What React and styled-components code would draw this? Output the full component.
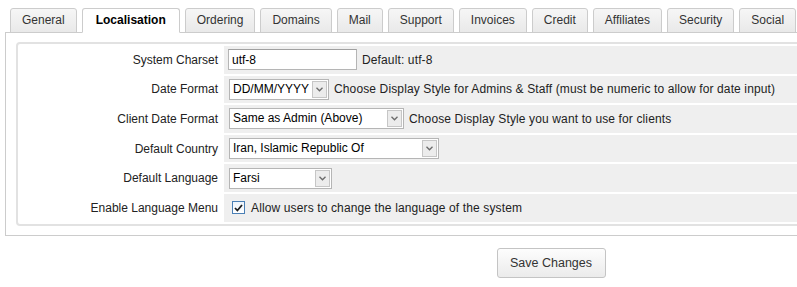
import React from 'react'
import styled, { createGlobalStyle } from 'styled-components'

const GlobalStyle = createGlobalStyle`
  body {
    margin: 0;
    background: #fff;
    overflow: hidden;
    font-family: 'Liberation Sans', Arial, sans-serif;
    font-size: 12px;
    color: #222;
  }
`

const Page = styled.div`
  width: 1092px;
  padding: 8px 0 0 5px;
`

const TabBar = styled.ul`
  display: flex;
  gap: 5px;
  margin: 0;
  padding: 0 0 0 5px;
  list-style: none;
  position: relative;
  z-index: 1;
`

const Tab = styled.li`
  height: 23px;
  line-height: 23px;
  padding: 0 ${(p) => (p.$active ? 13 : 11)}px;
  border: 1px solid #ccc;
  border-bottom-color: ${(p) => (p.$active ? '#fff' : '#ccc')};
  border-radius: 3px 3px 0 0;
  background: ${(p) => (p.$active ? '#fff' : 'linear-gradient(#f6f6f6, #e9e9e9)')};
  font-weight: ${(p) => (p.$active ? 'bold' : 'normal')};
  color: ${(p) => (p.$active ? '#000' : '#333')};
  white-space: nowrap;
  margin-bottom: -1px;
`

const TabBox = styled.div`
  border: 1px solid #ccc;
  padding: 9px 10px 9px 10px;
`

const FormTable = styled.table`
  width: 100%;
  border: 2px solid #e2e2e2;
  border-radius: 4px;
  border-spacing: 2px;
`

const Row = styled.tr`
  height: 27.6px;
`

const Label = styled.td`
  width: 198px;
  padding: 0 4px 0 0;
  text-align: right;
  background: #fff;
  white-space: nowrap;
`

const Field = styled.td`
  padding: 0 0 0 4px;
  background: #efefef;
  white-space: nowrap;
  letter-spacing: 0.13px;
`

const Line = styled.div`
  display: flex;
  align-items: center;
  gap: 5px;
`

const TextInput = styled.input`
  box-sizing: border-box;
  width: ${(p) => p.$w}px;
  height: 21px;
  padding: 0 3px;
  border: 1px solid #b5b5b5;
  border-top-color: #a0a0a0;
  background: #fff;
  font: inherit;
  letter-spacing: 0;
  color: #000;
  outline: none;
`

const Select = styled.div`
  box-sizing: border-box;
  display: flex;
  align-items: stretch;
  width: ${(p) => p.$w}px;
  height: 21px;
  margin-left: 1px;
  padding: 1px;
  border: 1px solid #b5b5b5;
  background: #fff;
  color: #000;
`

const SelectText = styled.span`
  flex: 1;
  padding-left: 2px;
  line-height: 17px;
  letter-spacing: 0;
`

const Arrow = styled.span`
  box-sizing: border-box;
  width: 15px;
  display: flex;
  align-items: center;
  justify-content: center;
  border: 1px solid #c6c6c6;
  background: #ececec;
`

const Check = styled.span`
  box-sizing: border-box;
  width: 13px;
  height: 13px;
  margin: 0 1px 0 4px;
  border: 1px solid #4a7fb5;
  background: linear-gradient(#eef4fb, #fff);
  display: flex;
  align-items: center;
  justify-content: center;
`

const ButtonRow = styled.div`
  display: flex;
  justify-content: center;
  padding-top: 12px;
`

const Button = styled.button`
  width: 109px;
  height: 30px;
  border: 1px solid #c4c4c4;
  border-radius: 3px;
  background: linear-gradient(#fdfdfd, #ebebeb);
  font-family: 'Liberation Sans', Arial, sans-serif;
  font-size: 12.5px;
  color: #333;
`

const tabs = ['General', 'Localisation', 'Ordering', 'Domains', 'Mail', 'Support', 'Invoices', 'Credit', 'Affiliates', 'Security', 'Social', 'Other']

function Chevron() {
  return (
    <svg width="7" height="5" viewBox="0 0 7 5">
      <path d="M0.5 0.8 L3.5 3.8 L6.5 0.8" fill="none" stroke="#6a6a6a" strokeWidth="1.3" />
    </svg>
  )
}

function FakeSelect({ width, value }) {
  return (
    <Select $w={width}>
      <SelectText>{value}</SelectText>
      <Arrow>
        <Chevron />
      </Arrow>
    </Select>
  )
}

export default function App() {
  return (
    <Page>
      <GlobalStyle />
      <TabBar>
        {tabs.map((t) => (
          <Tab key={t} $active={t === 'Localisation'}>
            {t}
          </Tab>
        ))}
      </TabBar>
      <TabBox>
        <FormTable>
          <tbody>
            <Row>
              <Label>System Charset</Label>
              <Field>
                <Line>
                  <TextInput $w={129} defaultValue="utf-8" />
                  <span>Default: utf-8</span>
                </Line>
              </Field>
            </Row>
            <Row>
              <Label>Date Format</Label>
              <Field>
                <Line>
                  <FakeSelect width={100} value="DD/MM/YYYY" />
                  <span>Choose Display Style for Admins &amp; Staff (must be numeric to allow for date input)</span>
                </Line>
              </Field>
            </Row>
            <Row>
              <Label>Client Date Format</Label>
              <Field>
                <Line>
                  <FakeSelect width={175} value="Same as Admin (Above)" />
                  <span>Choose Display Style you want to use for clients</span>
                </Line>
              </Field>
            </Row>
            <Row>
              <Label>Default Country</Label>
              <Field>
                <Line>
                  <FakeSelect width={210} value="Iran, Islamic Republic Of" />
                </Line>
              </Field>
            </Row>
            <Row>
              <Label>Default Language</Label>
              <Field>
                <Line>
                  <FakeSelect width={103} value="Farsi" />
                </Line>
              </Field>
            </Row>
            <Row>
              <Label>Enable Language Menu</Label>
              <Field>
                <Line>
                  <Check>
                    <svg width="9" height="8" viewBox="0 0 9 8">
                      <path d="M1 4 L3.4 6.5 L8 1" fill="none" stroke="#1d1d1d" strokeWidth="1.8" />
                    </svg>
                  </Check>
                  <span>Allow users to change the language of the system</span>
                </Line>
              </Field>
            </Row>
          </tbody>
        </FormTable>
      </TabBox>
      <ButtonRow>
        <Button>Save Changes</Button>
      </ButtonRow>
    </Page>
  )
}
